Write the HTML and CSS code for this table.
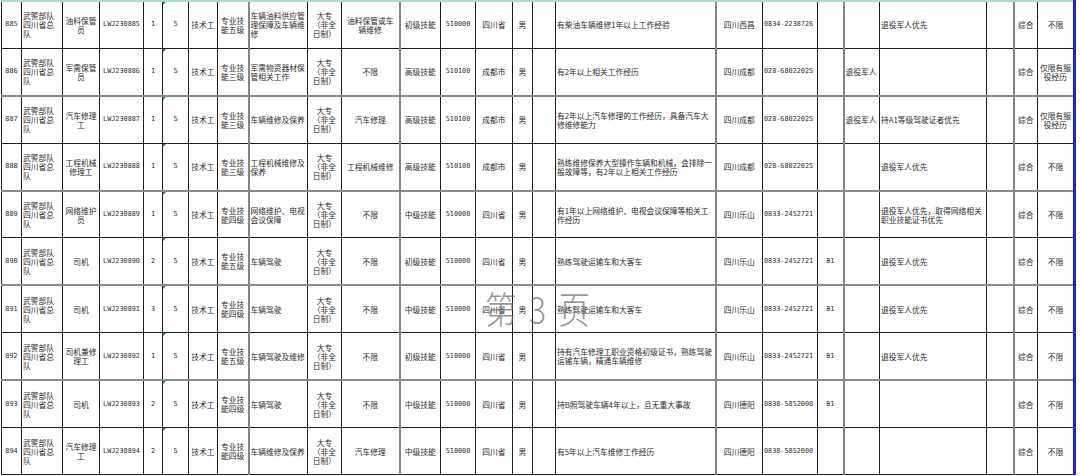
FILE: index.html
```html
<!DOCTYPE html>
<html lang="zh-CN">
<head>
<meta charset="utf-8">
<title>第3页</title>
<link rel="stylesheet" href="styles.css">
</head>
<body>
<div class="sheet">
  <table class="grid">
    <colgroup>
      <col class="w20"><col class="w41"><col class="w37"><col class="w44"><col class="w19">
      <col class="w26"><col class="w29"><col class="w31"><col class="w59"><col class="w34">
      <col class="w58"><col class="w41"><col class="w35"><col class="w37"><col class="w20">
      <col class="w23"><col class="w160"><col class="w47"><col class="w55"><col class="w26">
      <col class="w36"><col class="w107"><col class="w27"><col class="w24"><col class="w37">
    </colgroup>
    <tbody>
      <tr>
        <td class="m">885</td><td class="l">武警部队四川省总队</td><td>油料保管员</td><td class="m">LWJ230885</td><td class="m">1</td>
        <td class="m tri">5</td><td>技术工</td><td>专业技能五级</td><td class="l g">车辆油料供应管理保障及车辆维修</td><td class="p2">大专<br>（非全日制）</td>
        <td class="p3">油料保管或车辆维修</td><td class="g">初级技能</td><td class="m">510000</td><td>四川省</td><td>男</td>
        <td></td><td class="l">有柴油车辆维修1年以上工作经验</td><td class="g">四川西昌</td><td class="m l">0834-2238726</td><td class="m"></td>
        <td class="l g"></td><td class="l">退役军人优先</td><td></td><td class="g">综合</td><td>不限</td>
      </tr>
      <tr>
        <td class="m">886</td><td class="l">武警部队四川省总队</td><td>军需保管员</td><td class="m">LWJ230886</td><td class="m">1</td>
        <td class="m tri">5</td><td>技术工</td><td>专业技能三级</td><td class="l g">军需物资器材保管相关工作</td><td class="p2">大专<br>（非全日制）</td>
        <td class="p3">不限</td><td class="g">高级技能</td><td class="m">510100</td><td>成都市</td><td>男</td>
        <td></td><td class="l">有2年以上相关工作经历</td><td class="g">四川成都</td><td class="m l">028-68022025</td><td class="m"></td>
        <td class="l g">退役军人</td><td class="l"></td><td></td><td class="g">综合</td><td>仅限有服役经历</td>
      </tr>
      <tr class="gt">
        <td class="m">887</td><td class="l">武警部队四川省总队</td><td>汽车修理工</td><td class="m">LWJ230887</td><td class="m">1</td>
        <td class="m tri">5</td><td>技术工</td><td>专业技能三级</td><td class="l g">车辆维修及保养</td><td class="p2">大专<br>（非全日制）</td>
        <td class="p3">汽车修理</td><td class="g">高级技能</td><td class="m">510100</td><td>成都市</td><td>男</td>
        <td></td><td class="l">有2年以上汽车修理的工作经历，具备汽车大修维修能力</td><td class="g">四川成都</td><td class="m l">028-68022025</td><td class="m"></td>
        <td class="l g">退役军人</td><td class="l">持A1等级驾驶证者优先</td><td></td><td class="g">综合</td><td>仅限有服役经历</td>
      </tr>
      <tr>
        <td class="m">888</td><td class="l">武警部队四川省总队</td><td>工程机械修理工</td><td class="m">LWJ230888</td><td class="m">1</td>
        <td class="m tri">5</td><td>技术工</td><td>专业技能三级</td><td class="l g">工程机械维修及保养</td><td class="p2">大专<br>（非全日制）</td>
        <td class="p3">工程机械维修</td><td class="g">高级技能</td><td class="m">510100</td><td>成都市</td><td>男</td>
        <td></td><td class="l">熟练维修保养大型操作车辆和机械，会排除一般故障等，有2年以上相关工作经历</td><td class="g">四川成都</td><td class="m l">028-68022025</td><td class="m"></td>
        <td class="l g"></td><td class="l">退役军人优先</td><td></td><td class="g">综合</td><td>不限</td>
      </tr>
      <tr class="gt">
        <td class="m">889</td><td class="l">武警部队四川省总队</td><td>网络维护员</td><td class="m">LWJ230889</td><td class="m">1</td>
        <td class="m tri">5</td><td>技术工</td><td>专业技能四级</td><td class="l g">网络维护、电视会议保障</td><td class="p2">大专<br>（非全日制）</td>
        <td class="p3">不限</td><td class="g">中级技能</td><td class="m">510000</td><td>四川省</td><td>男</td>
        <td></td><td class="l">有1年以上网络维护、电视会议保障等相关工作经历</td><td class="g">四川乐山</td><td class="m l">0833-2452721</td><td class="m"></td>
        <td class="l g"></td><td class="l">退役军人优先，取得网络相关职业技能证书优先</td><td></td><td class="g">综合</td><td>不限</td>
      </tr>
      <tr>
        <td class="m">890</td><td class="l">武警部队四川省总队</td><td>司机</td><td class="m">LWJ230890</td><td class="m">2</td>
        <td class="m tri">5</td><td>技术工</td><td>专业技能五级</td><td class="l g">车辆驾驶</td><td class="p2">大专<br>（非全日制）</td>
        <td class="p3">不限</td><td class="g">初级技能</td><td class="m">510000</td><td>四川省</td><td>男</td>
        <td></td><td class="l">熟练驾驶运输车和大客车</td><td class="g">四川乐山</td><td class="m l">0833-2452721</td><td class="m">B1</td>
        <td class="l g"></td><td class="l">退役军人优先</td><td></td><td class="g">综合</td><td>不限</td>
      </tr>
      <tr class="gt">
        <td class="m">891</td><td class="l">武警部队四川省总队</td><td>司机</td><td class="m">LWJ230891</td><td class="m">3</td>
        <td class="m tri">5</td><td>技术工</td><td>专业技能四级</td><td class="l g">车辆驾驶</td><td class="p2">大专<br>（非全日制）</td>
        <td class="p3">不限</td><td class="g">中级技能</td><td class="m">510000</td><td>四川省</td><td>男</td>
        <td></td><td class="l">熟练驾驶运输车和大客车</td><td class="g">四川乐山</td><td class="m l">0833-2452721</td><td class="m">B1</td>
        <td class="l g"></td><td class="l">退役军人优先</td><td></td><td class="g">综合</td><td>不限</td>
      </tr>
      <tr>
        <td class="m">892</td><td class="l">武警部队四川省总队</td><td>司机兼修理工</td><td class="m">LWJ230892</td><td class="m">1</td>
        <td class="m tri">5</td><td>技术工</td><td>专业技能五级</td><td class="l g">车辆驾驶及维修</td><td class="p2">大专<br>（非全日制）</td>
        <td class="p3">不限</td><td class="g">初级技能</td><td class="m">510000</td><td>四川省</td><td>男</td>
        <td></td><td class="l">持有汽车修理工职业资格初级证书，熟练驾驶运输车辆，精通车辆维修</td><td class="g">四川乐山</td><td class="m l">0833-2452721</td><td class="m">B1</td>
        <td class="l g"></td><td class="l">退役军人优先</td><td></td><td class="g">综合</td><td>不限</td>
      </tr>
      <tr class="gt">
        <td class="m">893</td><td class="l">武警部队四川省总队</td><td>司机</td><td class="m">LWJ230893</td><td class="m">2</td>
        <td class="m tri">5</td><td>技术工</td><td>专业技能四级</td><td class="l g">车辆驾驶</td><td class="p2">大专<br>（非全日制）</td>
        <td class="p3">不限</td><td class="g">中级技能</td><td class="m">510000</td><td>四川省</td><td>男</td>
        <td></td><td class="l">持B照驾驶车辆4年以上，且无重大事故</td><td class="g">四川德阳</td><td class="m l">0838-5852000</td><td class="m">B1</td>
        <td class="l g"></td><td class="l"></td><td></td><td class="g">综合</td><td>不限</td>
      </tr>
      <tr>
        <td class="m">894</td><td class="l">武警部队四川省总队</td><td>汽车修理工</td><td class="m">LWJ230894</td><td class="m">2</td>
        <td class="m tri">5</td><td>技术工</td><td>专业技能四级</td><td class="l g">车辆维修及保养</td><td class="p2">大专<br>（非全日制）</td>
        <td class="p3">汽车修理</td><td class="g">中级技能</td><td class="m">510000</td><td>四川省</td><td>男</td>
        <td></td><td class="l">有5年以上汽车维修工作经历</td><td class="g">四川德阳</td><td class="m l">0838-5852000</td><td class="m"></td>
        <td class="l g"></td><td class="l"></td><td></td><td class="g">综合</td><td>不限</td>
      </tr>
    </tbody>
  </table>
  <div class="watermark">第 3 页</div>
</div>
</body>
</html>
```

FILE: styles.css
```css
html, body {
  margin: 0;
  padding: 0;
  background: #ffffff;
}

.sheet {
  position: relative;
  width: 1080px;
  height: 476px;
  overflow: hidden;
  padding-left: 1px;
  box-sizing: border-box;
}

.grid {
  border-collapse: collapse;
  table-layout: fixed;
  width: 1075px;
  border-top: 2px solid #a8dcc8;
  border-left: 1px solid #5d5bd6;
  border-right: 3px solid #1f1fe0;
  font-family: "Noto Sans CJK SC", sans-serif;
  font-size: 7.75px;
  line-height: 9px;
  color: #2b2b2b;
}

.grid tr {
  height: 47.4px;
}

.grid td {
  border: 1px solid #1e1e1e;
  padding: 0 1px;
  text-align: center;
  vertical-align: middle;
  overflow: hidden;
  word-break: break-all;
}

.grid td.p2 {
  padding: 0 2px;
}

.grid td.p3 {
  padding: 0 3px;
}

.grid tr:first-child td {
  border-top: 2px solid #a8dcc8;
}

.grid tr.gt td {
  border-top: 2px solid #8a8a8a;
}

.grid td.l {
  text-align: left;
}

.grid td.g {
  border-left: 2px solid #858585;
}

.grid td.m {
  font-family: "DejaVu Sans Mono", monospace;
  font-size: 6.8px;
  white-space: nowrap;
}

.grid td.tri {
  position: relative;
}

.grid td.tri::before {
  content: "";
  position: absolute;
  left: 0;
  top: 0;
  border-top: 3px solid #1b9a1b;
  border-right: 3px solid transparent;
}

.w19 { width: 19px; }
.w20 { width: 20px; }
.w23 { width: 23px; }
.w24 { width: 24px; }
.w26 { width: 26px; }
.w27 { width: 27px; }
.w29 { width: 29px; }
.w31 { width: 31px; }
.w34 { width: 34px; }
.w35 { width: 35px; }
.w36 { width: 36px; }
.w37 { width: 37px; }
.w41 { width: 41px; }
.w44 { width: 44px; }
.w47 { width: 47px; }
.w55 { width: 55px; }
.w58 { width: 58px; }
.w59 { width: 59px; }
.w107 { width: 107px; }
.w160 { width: 160px; }

.watermark {
  position: absolute;
  left: 485px;
  top: 288px;
  font-family: "Noto Sans CJK SC", sans-serif;
  font-weight: 300;
  font-size: 37px;
  line-height: 40px;
  letter-spacing: 3px;
  color: rgba(110, 110, 110, 0.72);
  transform: scaleX(0.86);
  transform-origin: left top;
  white-space: nowrap;
  pointer-events: none;
}
```
